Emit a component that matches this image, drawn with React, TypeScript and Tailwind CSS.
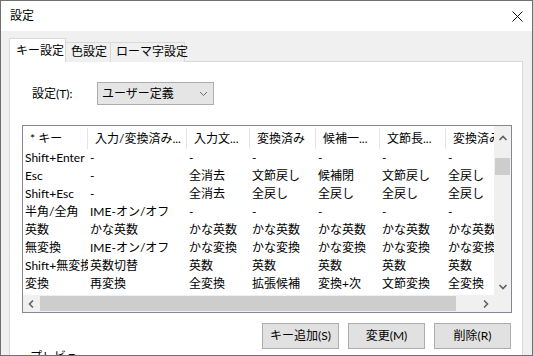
import React from "react";

const cols = [65, 99, 63, 66, 64, 66, 80];
const headers = ["* キー", "入力/変換済み...", "入力文...", "変換済み", "候補一...", "文節長...", "変換済み"];
const rows: string[][] = [
  ["Shift+Enter", "-", "-", "-", "-", "-", "-"],
  ["Esc", "-", "全消去", "文節戻し", "候補閉", "文節戻し", "全戻し"],
  ["Shift+Esc", "-", "全消去", "全戻し", "全戻し", "全戻し", "全戻し"],
  ["半角/全角", "IME-オン/オフ", "-", "-", "-", "-", "-"],
  ["英数", "かな英数", "かな英数", "かな英数", "かな英数", "かな英数", "かな英数"],
  ["無変換", "IME-オン/オフ", "かな変換", "かな変換", "かな変換", "かな変換", "かな変換"],
  ["Shift+無変換", "英数切替", "英数", "英数", "英数", "英数", "英数"],
  ["変換", "再変換", "全変換", "拡張候補", "変換+次", "文節変換", "全変換"],
];

function Chevron({ dir }: { dir: "up" | "down" | "left" | "right" }) {
  const pts: Record<string, string> = {
    up: "1.5,6 5,2.5 8.5,6",
    down: "1.5,3 5,6.5 8.5,3",
    left: "6,1.5 2.5,5 6,8.5",
    right: "3,1.5 6.5,5 3,8.5",
  };
  return (
    <svg width="10" height="10" viewBox="0 0 10 10">
      <polyline points={pts[dir]} fill="none" stroke="#606060" strokeWidth="1.6" />
    </svg>
  );
}

export default function App() {
  return (
    <div className="w-[533px] h-[356px] overflow-hidden border border-[#6f6f6f] bg-[#f0f0f0] flex flex-col font-['Lato','Noto_Sans_CJK_JP',sans-serif] text-[12px] text-black">
      {/* title bar */}
      <div className="h-[30px] shrink-0 bg-white flex items-center justify-between pl-[9px] pr-[9px]">
        <span className="leading-none">設定</span>
        <svg width="11" height="11" viewBox="0 0 11 11">
          <path d="M0.5 0.5 L10.5 10.5 M10.5 0.5 L0.5 10.5" stroke="#111" strokeWidth="1" />
        </svg>
      </div>
      {/* body */}
      <div className="flex-1 flex flex-col pl-[8px] pr-[9px] pt-[7px]">
        {/* tabs */}
        <div className="flex items-end h-[24px] -mb-px relative z-10 shrink-0 whitespace-nowrap">
          <div className="w-[57px] h-[24px] bg-white border border-b-0 border-[#d9d9d9] flex items-start pt-[4px] pl-[6px] leading-[16px]">
            キー設定
          </div>
          <div className="w-[45px] h-[20px] border-t border-r border-[#d9d9d9] bg-[#f0f0f0] flex items-start pl-[5px] pt-[1px] leading-[16px]">
            色設定
          </div>
          <div className="w-[74px] h-[20px] border-t border-r border-[#d9d9d9] bg-[#f0f0f0] flex items-start pl-[5px] pt-[1px] leading-[16px]">
            ローマ字設定
          </div>
        </div>
        {/* panel */}
        <div className="flex-1 bg-white border border-[#d9d9d9] flex flex-col">
          <div className="flex items-center mt-[20px] pl-[22px]">
            <span className="w-[65px] leading-none">設定(T):</span>
            <div className="w-[117px] h-[23px] bg-[#e5e5e5] border border-[#adadad] flex items-center justify-between pl-[4px] pr-[5px]">
              <span className="leading-none">ユーザー定義</span>
              <svg width="9" height="6" viewBox="0 0 9 6">
                <polyline points="1,1 4.5,4.5 8,1" fill="none" stroke="#6d6d6d" strokeWidth="1" />
              </svg>
            </div>
          </div>
          {/* list view */}
          <div className="mt-[20px] ml-[12px] mr-[10px] h-[188px] border border-[#828790] bg-white flex flex-col shrink-0">
            <div className="flex-1 flex min-h-0">
              <div className="flex-1 overflow-hidden flex flex-col">
                <div className="flex h-[23px] shrink-0">
                  {headers.map((h, i) => (
                    <div
                      key={i}
                      className="relative shrink-0 overflow-hidden whitespace-nowrap pl-[7px] pt-[5px] leading-[16px]"
                      style={{ width: cols[i] }}
                    >
                      {h}
                      <div className="absolute right-0 top-[2px] bottom-0 w-px bg-[#e5e5e5]" />
                    </div>
                  ))}
                </div>
                {rows.map((r, ri) => (
                  <div key={ri} className="flex h-[18px] shrink-0">
                    {r.map((c, ci) => (
                      <div
                        key={ci}
                        className="shrink-0 overflow-hidden whitespace-nowrap pl-[2px] leading-[18px]"
                        style={{ width: cols[ci] }}
                      >
                        {c}
                      </div>
                    ))}
                  </div>
                ))}
              </div>
              {/* vertical scrollbar */}
              <div className="w-[17px] shrink-0 bg-[#f0f0f0] flex flex-col">
                <div className="h-[17px] flex items-center justify-center mt-[4px]">
                  <Chevron dir="up" />
                </div>
                <div className="h-[17px] mt-[11px] mx-[1px] bg-[#cdcdcd]" />
                <div className="flex-1" />
                <div className="h-[17px] flex items-center justify-center">
                  <Chevron dir="down" />
                </div>
              </div>
            </div>
            {/* horizontal scrollbar */}
            <div className="h-[17px] shrink-0 flex bg-[#f0f0f0]">
              <div className="w-[17px] flex items-center justify-center">
                <Chevron dir="left" />
              </div>
              <div className="w-[416px] my-[1px] bg-[#cdcdcd]" />
              <div className="w-[21px]" />
              <div className="w-[17px] flex items-center justify-center">
                <Chevron dir="right" />
              </div>
              <div className="w-[17px]" />
            </div>
          </div>
          {/* buttons */}
          <div className="flex justify-end gap-[9px] mt-[10px] pr-[11px] shrink-0">
            {["キー追加(S)", "変更(M)", "削除(R)"].map((b) => (
              <div
                key={b}
                className="w-[77px] h-[26px] bg-[#e1e1e1] border border-[#adadad] flex items-center justify-center leading-none"
              >
                {b}
              </div>
            ))}
          </div>
          <div className="pl-[20px] mt-[0px] leading-[16px]">プレビュー</div>
        </div>
      </div>
    </div>
  );
}
